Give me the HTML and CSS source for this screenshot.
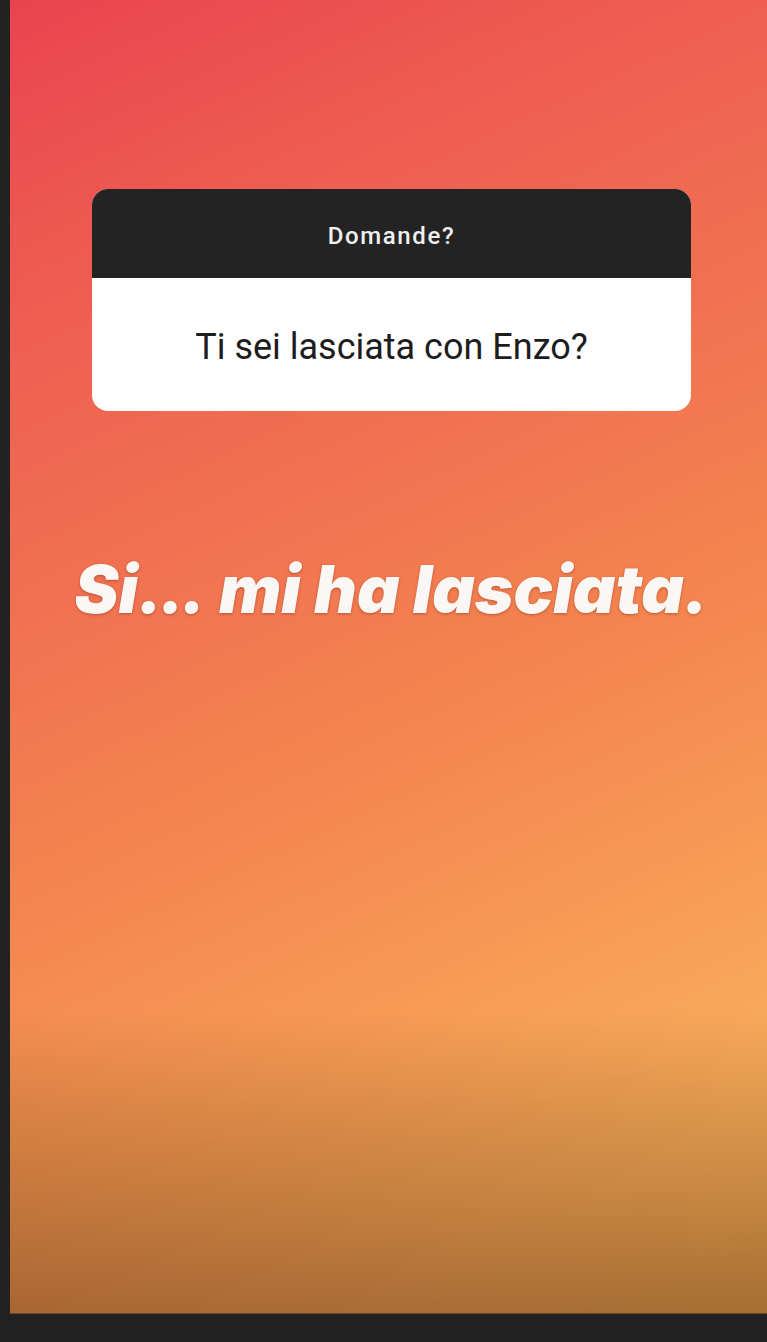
FILE: index.html
```html
<!DOCTYPE html>
<html lang="it">
<head>
<meta charset="utf-8">
<link rel="stylesheet" href="styles.css">
<title>Story</title>
</head>
<body>
<div class="frame">
  <div class="story">
    <div class="question-card">
      <div class="card-head">Domande?</div>
      <div class="card-body">Ti sei lasciata con Enzo?</div>
    </div>
    <p class="answer">Si<span class="dots">...</span> mi ha lasciata.</p>
  </div>
</div>
</body>
</html>
```

FILE: styles.css
```css
html, body {
  margin: 0;
  padding: 0;
  background: #222222;
}
.frame {
  width: 767px;
  height: 1342px;
  padding: 0 0 28px 10px;
  box-sizing: border-box;
  display: flex;
}
.story {
  flex: 1;
  position: relative;
  background:
    linear-gradient(to bottom, rgba(90, 50, 10, 0) 0%, rgba(90, 50, 10, 0) 77%, rgba(110, 60, 10, 0.22) 85%, rgba(95, 45, 15, 0.52) 100%),
    linear-gradient(155deg, #e8444f 0%, #ee5c51 18%, #f07052 36%, #f4854f 55%, #f79b56 72%, #f9b05e 88%, #f5b65a 100%);
  border-bottom: 1px solid #6a4a22;
  padding-top: 189px;
  box-sizing: border-box;
  display: flex;
  flex-direction: column;
  align-items: flex-start;
}
.question-card {
  margin-left: 82px;
  width: 599px;
  border-radius: 16px;
  overflow: hidden;
  background: #fefefe;
  font-family: Roboto, "Liberation Sans", sans-serif;
}
.card-head {
  height: 89px;
  background: #232323;
  color: #f0f0f0;
  font-size: 24px;
  font-weight: 500;
  letter-spacing: 1.6px;
  display: flex;
  align-items: center;
  justify-content: center;
  padding-top: 4px;
  box-sizing: border-box;
}
.card-body {
  height: 133px;
  color: #1d1d1d;
  font-size: 36px;
  display: flex;
  align-items: center;
  justify-content: center;
  padding-top: 4px;
  box-sizing: border-box;
}
.answer {
  margin: 138px 0 0 0;
  align-self: stretch;
  text-align: center;
  padding-left: 6px;
  font-family: Inter, Roboto, "Liberation Sans", sans-serif;
  font-weight: 900;
  font-style: italic;
  font-size: 66px;
  line-height: 80px;
  color: #fbf7f4;
  text-shadow: 0 1px 3px rgba(120, 40, 20, 0.45);
}
.dots {
  letter-spacing: -3px;
  margin-right: 3px;
}
```
